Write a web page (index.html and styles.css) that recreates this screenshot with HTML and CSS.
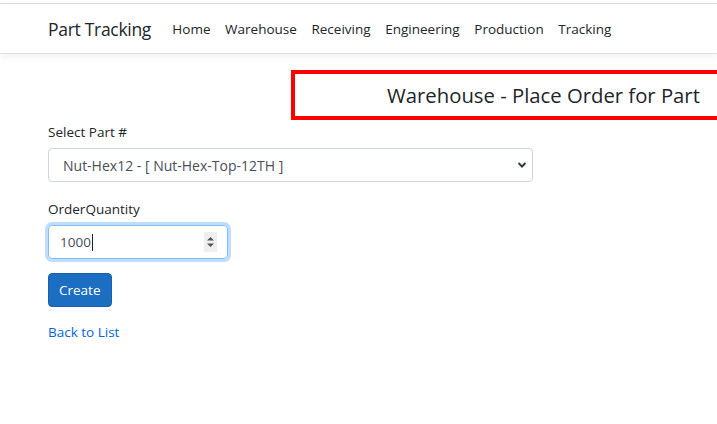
FILE: index.html
```html
<!DOCTYPE html>
<html>
<head>
<meta charset="utf-8">
<link rel="stylesheet" href="styles.css">
</head>
<body>
<header class="topbar">
  <nav class="navbar">
    <a class="brand" href="#">Part Tracking</a>
    <ul class="nav">
      <li><a href="#">Home</a></li>
      <li><a href="#">Warehouse</a></li>
      <li><a href="#">Receiving</a></li>
      <li><a href="#">Engineering</a></li>
      <li><a href="#">Production</a></li>
      <li><a href="#">Tracking</a></li>
    </ul>
  </nav>
</header>
<main class="main">
  <div class="title-row">
    <h4 class="title">Warehouse - Place Order for Part</h4>
  </div>
  <form class="form">
    <div class="group group-first">
      <label class="label">Select Part #</label>
      <div class="select">
        <span>Nut-Hex12 - [ Nut-Hex-Top-12TH ]</span>
        <svg class="chev" width="10" height="8" viewBox="0 0 10 8"><path d="M1.5 2 L5 5.5 L8.5 2" fill="none" stroke="#343a40" stroke-width="2"/></svg>
      </div>
    </div>
    <div class="group">
      <label class="label">OrderQuantity</label>
      <div class="number">
        <span class="val">1000</span><span class="caret"></span>
        <span class="spin">
          <svg width="9" height="14" viewBox="0 0 9 14"><path d="M1 5.5 L4.5 2 L8 5.5 Z M1 8.5 L4.5 12 L8 8.5 Z" fill="#555"/></svg>
        </span>
      </div>
    </div>
    <button type="button" class="btn">Create</button>
  </form>
  <a class="back" href="#">Back to List</a>
</main>
</body>
</html>
```
FILE: styles.css
```css
html, body {
  margin: 0;
  padding: 0;
  background: #fff;
  overflow: hidden;
}
body {
  font-family: "Open Sans", "Noto Sans", sans-serif;
  font-size: 13.5px;
  color: #212529;
  padding-top: 3px;
}
.topbar {
  border-top: 1px solid #dcdcdc;
  border-bottom: 1px solid #e1e1e1;
  box-shadow: 0 3px 8px rgba(0,0,0,0.05);
  height: 49px;
}
.navbar {
  display: flex;
  align-items: center;
  height: 49px;
  padding-left: 48px;
}
.brand {
  font-size: 17.5px;
  color: #212529;
  text-decoration: none;
  margin-right: 14px;
  letter-spacing: -0.3px;
}
.nav {
  display: flex;
  list-style: none;
  margin: 0;
  padding: 0;
}
.nav a {
  display: block;
  padding: 0 7.3px;
  color: #212529;
  text-decoration: none;
  font-size: 13.5px;
}
.main {
  padding-left: 48px;
}
.title-row {
  padding-top: 16px;
  padding-left: 243px;
  display: flex;
}
.title {
  flex: 1;
  margin: 0;
  height: 42px;
  border: 4px solid #ff0000;
  border-right: none;
  font-weight: 400;
  font-size: 20.3px;
  line-height: 42px;
  text-align: center;
  white-space: nowrap;
  padding-left: 75px;
}
.form {
  margin-top: 2px;
}
.group {
  margin-bottom: 14px;
}
.group-first {
  margin-bottom: 17px;
}
.label {
  display: block;
  margin-bottom: 6px;
  line-height: 20px;
}
.select {
  width: 485px;
  height: 34px;
  box-sizing: border-box;
  border: 1px solid #ced4da;
  border-radius: 4px;
  display: flex;
  align-items: center;
  justify-content: space-between;
  padding: 0 5px 0 14px;
  color: #495057;
  font-size: 14px;
}
.chev { display: block; }
.number {
  width: 180px;
  height: 34px;
  box-sizing: border-box;
  border: 1px solid #80bdff;
  border-radius: 4px;
  box-shadow: 0 0 0 3px rgba(0,123,255,0.25);
  display: flex;
  align-items: center;
  padding: 0 10px 0 11px;
  color: #495057;
}
.caret {
  width: 1px;
  height: 17px;
  background: #222;
  margin-left: 1px;
}
.spin {
  margin-left: auto;
  width: 13px;
  height: 20px;
  background: #efefef;
  display: flex;
  align-items: center;
  justify-content: center;
}
.btn {
  background: #1b6ec2;
  border: 1px solid #1861ac;
  color: #fff;
  border-radius: 4px;
  font-family: inherit;
  font-size: 13.5px;
  height: 34px;
  padding: 0 10px;
}
.back {
  display: inline-block;
  margin-top: 16px;
  color: #0366d6;
  text-decoration: none;
}
```
